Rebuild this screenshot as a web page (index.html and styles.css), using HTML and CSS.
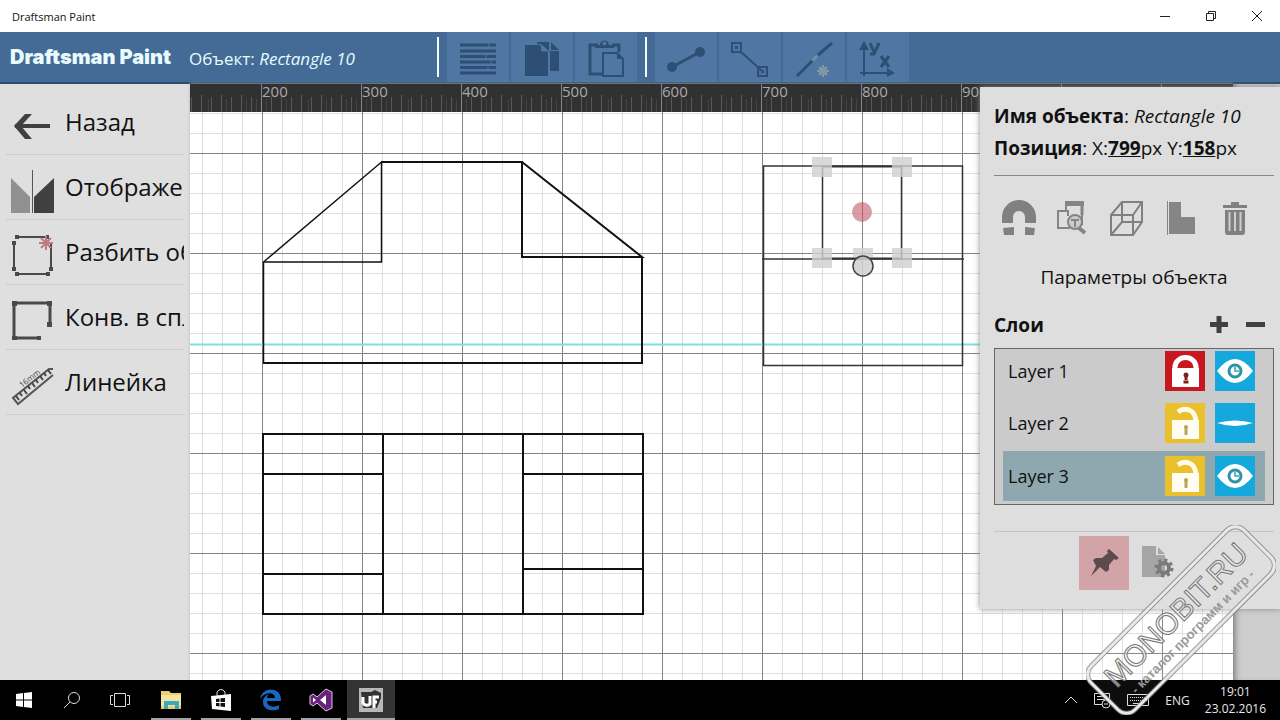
FILE: index.html
```html
<!DOCTYPE html>
<html lang="ru">
<head>
<meta charset="utf-8">
<title>Draftsman Paint</title>
<link rel="stylesheet" href="styles.css">
</head>
<body>
<div class="titlebar">
  <span class="titlebar-name">Draftsman Paint</span>
  <div class="window-buttons">
    <button class="window-button" aria-label="Свернуть"><svg width="12" height="12" viewBox="0 0 12 12"><path d="M1 6.500H11" class="thin"/></svg></button>
    <button class="window-button" aria-label="Восстановить"><svg width="12" height="12" viewBox="0 0 12 12"><path d="M1.500 3.500H8.500V10.500H1.500ZM3.500 3.500V1.500H10.500V8.500H8.500" class="thin"/></svg></button>
    <button class="window-button" aria-label="Закрыть"><svg width="12" height="12" viewBox="0 0 12 12"><path d="M1 1L11 11M11 1L1 11" class="thin"/></svg></button>
  </div>
</div>

<header class="header">
  <h1 class="brand">Draftsman Paint</h1>
  <p class="current">Объект: <em>Rectangle 10</em></p>
  <div class="toolbar">
    <button class="tool" aria-label="Штриховка"><svg width="40" height="40" viewBox="0 0 40 40"><path d="M2 8H38M2 14H38M2 19.500H38M2 25H38M2 30.500H38M2 36H38" stroke="#2d4f73" stroke-width="3"/><path d="M31 6V10M28 17V21M33 23V27M30 28V32" stroke="#5077a3" stroke-width="1"/></svg></button>
    <button class="tool" aria-label="Копировать"><svg width="40" height="40" viewBox="0 0 40 40"><path d="M3 8H19V14H26V39H3Z" fill="#2d4f73"/><path d="M15 5H27V14H37V34H28V15L19 7H15Z" fill="#2d4f73"/><path d="M29 5L37 13H29Z" fill="#2d4f73"/><path d="M20 8V14H26" fill="none" stroke="#5077a3"/></svg></button>
    <button class="tool" aria-label="Вставить"><svg width="40" height="40" viewBox="0 0 40 40"><path d="M12 8H4V37H17M26 8H33V15" fill="none" stroke="#2d4f73" stroke-width="3"/><path d="M9 11V8H14A4.500 4.500 0 0 1 23 8H28V11Z" fill="#2d4f73"/><circle cx="18.500" cy="6.500" r="2" fill="#5077a3"/><path d="M17 16H31L37 22V39H17Z" fill="#5077a3" stroke="#2d4f73" stroke-width="2"/><path d="M31 15V22H38Z" fill="#2d4f73"/></svg></button>
  </div>
  <div class="toolbar">
    <button class="tool" aria-label="Линия"><svg width="40" height="40" viewBox="0 0 40 40"><path d="M6 30L34 15" stroke="#2d4f73" stroke-width="3"/><circle cx="6" cy="30" r="5" fill="#2d4f73"/><circle cx="34" cy="15" r="5" fill="#2d4f73"/></svg></button>
    <button class="tool" aria-label="Отрезок"><svg width="40" height="40" viewBox="0 0 40 40"><path d="M10 14L32 34" stroke="#2d4f73" stroke-width="2"/><path d="M2 6H11V15H2ZM28 30H37V39H28Z" fill="none" stroke="#2d4f73" stroke-width="2"/><path d="M5 9H8V12H5ZM31 33H34V36H31Z" fill="#2d4f73"/></svg></button>
    <button class="tool" aria-label="Разрезать"><svg width="40" height="40" viewBox="0 0 40 40"><path d="M3 39L18 24M24 18L38 6" stroke="#2d4f73" stroke-width="3"/><path d="M19 23L23 19" stroke="#75909a" stroke-width="3"/><circle cx="29" cy="34" r="4" fill="#8298a0"/><path d="M29 28V40M23 34H35M25 30L33 38M33 30L25 38" stroke="#8298a0" stroke-width="2"/></svg></button>
    <button class="tool" aria-label="Оси координат"><svg width="40" height="40" viewBox="0 0 40 40"><path d="M6 39V8M2 36H32" stroke="#2d4f73" stroke-width="2"/><path d="M6 4L11 13H1ZM37 36L29 31V40Z" fill="#2d4f73"/><path d="M12 6L16 15M21 6L16 17H12M23 19L31 30M31 19L23 30" stroke="#2d4f73" stroke-width="3" fill="none"/></svg></button>
  </div>
</header>

<main class="workspace">
  <nav class="sidebar">
    <button class="side-item"><svg width="44" height="48" viewBox="0 0 44 48"><path d="M5 26H40" stroke="#404040" stroke-width="4"/><path d="M4 26L15 14H22L11 26L22 39H15Z" fill="#404040"/></svg><span class="side-label">Назад</span></button>
    <button class="side-item"><svg width="44" height="48" viewBox="0 0 44 48"><path d="M1 13L20 32V48H1Z" fill="#909090"/><path d="M44 13L24 32V48H44Z" fill="#404040"/><path d="M22.500 5V48" stroke="#555"/></svg><span class="side-label">Отображе</span></button>
    <button class="side-item"><svg width="44" height="48" viewBox="0 0 44 48"><path d="M7 7H37M41 14V39M37 44H7M4 39V13" stroke="#4a4a4a" stroke-width="2"/><path d="M5 5H9V9H5ZM36 5H39V9H36ZM2 11H6V15H2ZM2 37H6V41H2ZM5 42H9V46H5ZM36 42H40V46H36ZM39 37H43V41H39Z" fill="#4a4a4a"/><path d="M36 6V20M29 13H43M31 8L41 18M41 8L31 18" stroke="#be7b80" stroke-width="2"/></svg><span class="side-label">Разбить об</span></button>
    <button class="side-item"><svg width="44" height="48" viewBox="0 0 44 48"><path d="M28 43H4V8H40V30" stroke="#4a4a4a" stroke-width="3" fill="none"/><path d="M2 6H7V11H2ZM37 6H42V11H37ZM2 41H7V45H2ZM27 41H31V45H27ZM37 27H42V32H37Z" fill="#4a4a4a"/></svg><span class="side-label">Конв. в спл</span></button>
    <button class="side-item"><svg width="44" height="48" viewBox="0 0 44 48"><path d="M43 9L39 9L3 38L8 44L43 15" fill="none" stroke="#555" stroke-width="2"/><path d="M6 36L9 40M10 33L12 36M14 30L17 34M18 26L20 29M22 23L25 27M26 20L28 23M30 16L33 20M34 13L36 16M38 10L41 14" stroke="#444" stroke-width="2"/><text x="0" y="0" transform="translate(12 28) rotate(-38)" class="ruler-mark">16mm</text></svg><span class="side-label">Линейка</span></button>
  </nav>

  <section class="stage">
    <svg class="ruler" width="100%" height="28">
      <defs><pattern id="ticks" width="100" height="28" patternUnits="userSpaceOnUse" x="71">
        <path d="M.5 0V28" stroke="#858585"/>
        <path d="M10.500 13V28M20.500 11V28M30.500 13V28M40.500 11V28M50.500 13V28M60.500 11V28M70.500 13V28M80.500 11V28M90.500 13V28" stroke="#585858"/>
        <path d="M5.500 15V28M25.500 15V28M47.500 15V28M65.500 15V28M85.500 15V28M95.500 15V28" stroke="#444"/>
      </pattern></defs>
      <rect width="100%" height="28" fill="#313131"/>
      <rect width="100%" height="28" fill="url(#ticks)"/>
      <g class="ruler-numbers"><text x="72" y="13">200</text><text x="172" y="13">300</text><text x="272" y="13">400</text><text x="372" y="13">500</text><text x="472" y="13">600</text><text x="572" y="13">700</text><text x="672" y="13">800</text><text x="772" y="13">900</text></g>
    </svg>
    <svg class="canvas" width="100%" height="100%">
      <defs><pattern id="grid" width="100" height="100" patternUnits="userSpaceOnUse" x="72" y="41">
        <path d="M20.500 0V100M40.500 0V100M60.500 0V100M80.500 0V100M0 20.500H100M0 40.500H100M0 60.500H100M0 80.500H100" stroke="#dedede"/>
        <path d="M0 .5H100M.5 0V100" stroke="#848484"/>
      </pattern></defs>
      <rect width="100%" height="100%" fill="#fff"/>
      <rect width="100%" height="100%" fill="url(#grid)"/>
      <path d="M0 232.500H1043" stroke="#7fdfdf" stroke-width="2"/>
      <g fill="none" stroke="#111">
        <path d="M73.500 251V150L191.500 50V150H73.500" stroke-width="1.500"/>
        <path d="M191 50H332V145H452L332 50M73 251H452V145" stroke-width="2"/>
        <path d="M73 322H453V502H73ZM193 322V502M333 322V502M73 362H193M73 462H193M333 362H453M333 457H453" stroke-width="2"/>
      </g>
      <g fill="none" stroke="#333" stroke-width="1.500">
        <path d="M573.500 54H772.500V253.500H573.500ZM572 147H774M632.500 54V147M711.500 54V147"/>
        <path d="M632 54.500H712M632 146.500H712" stroke-width="2"/>
      </g>
      <g fill="#cfcfcf" fill-opacity=".8"><path d="M622 45H642V65H622ZM702 45H722V65H702ZM622 136H642V156H622ZM702 136H722V156H702ZM663 136H683V145H663Z"/></g>
      <circle cx="672" cy="100" r="10" fill="#ca7480" fill-opacity=".7"/>
      <path d="M672.500 90V110" stroke="#a05560" stroke-opacity=".6"/>
      <circle cx="673" cy="154" r="10" fill="#d0d0d0" fill-opacity=".85" stroke="#444" stroke-width="1.500"/>
    </svg>
  </section>
  <div class="beyond"></div>

  <aside class="panel">
    <p class="fact"><b>Имя объекта</b>: <em>Rectangle 10</em></p>
    <p class="fact"><b>Позиция</b>: X:<button class="value">799</button>px Y:<button class="value">158</button>px</p>
    <hr class="rule dark">
    <div class="object-tools">
      <button class="plain" aria-label="Магнит"><svg width="36" height="36" viewBox="0 0 36 36"><path d="M1 23V17A17 17 0 0 1 35 17V23H24V17A6 6 0 0 0 12 17V23ZM2 28L13 27V35H3ZM24 27L34 28L33 35H24Z" fill="#808080"/></svg></button>
      <button class="plain" aria-label="Найти объект"><svg width="36" height="36" viewBox="0 0 36 36"><path d="M10 3H27V15" stroke="#858585" stroke-width="3" fill="none"/><path d="M11 3V11M27 14V25M8 11H3V28H15M7 11H13V16" stroke="#858585" stroke-width="2" fill="none"/><path d="M10 1H29V6H10Z" fill="#858585"/><circle cx="20" cy="22" r="7" fill="#ccc" stroke="#858585" stroke-width="2"/><path d="M16 20H24M20 20V27" stroke="#858585" stroke-width="2"/><path d="M24 28L30 33" stroke="#858585" stroke-width="4"/></svg></button>
      <button class="plain" aria-label="Куб"><svg width="36" height="36" viewBox="0 0 36 36"><path d="M2 15L13 2H33V22L24 35H2ZM2 15H24V35M24 15L33 2M13 2V22H33M13 22L2 35" fill="none" stroke="#808080" stroke-width="2"/></svg></button>
      <button class="plain" aria-label="Выровнять"><svg width="36" height="36" viewBox="0 0 36 36"><path d="M4.500 1V35" stroke="#858585"/><path d="M6 2H18V17H32V34H6Z" fill="#858585"/></svg></button>
      <button class="plain" aria-label="Удалить"><svg width="36" height="36" viewBox="0 0 36 36"><path d="M6 8V5H14V2H22V5H30V8ZM8 10H28V32Q28 35 25 35H11Q8 35 8 32Z" fill="#808080"/><path d="M12.500 12V31M18 12V31M23.500 12V31" stroke="#cecece" stroke-width="2"/></svg></button>
    </div>
    <h2 class="params">Параметры объекта</h2>
    <div class="layers-head">
      <h3 class="layers-title">Слои</h3>
      <button class="plain" aria-label="Добавить слой"><svg width="20" height="20" viewBox="0 0 20 20"><path d="M10 1V18M1 9.500H19" stroke="#404040" stroke-width="5"/></svg></button>
      <button class="plain" aria-label="Удалить слой"><svg width="20" height="20" viewBox="0 0 20 20"><path d="M1 9.500H20" stroke="#404040" stroke-width="5"/></svg></button>
    </div>
    <ul class="layers">
      <li class="layer"><span class="layer-name">Layer 1</span>
        <button class="lock locked" aria-label="Разблокировать"><svg width="40" height="40" viewBox="0 0 40 40"><path d="M10 18V16A10.500 9.500 0 0 1 31 16V18" fill="none" stroke="#fff" stroke-width="5"/><path d="M7 17H34V36H7Z" fill="#fff"/><circle cx="21" cy="24" r="2.500" fill="#802020"/><path d="M21 24V29" stroke="#802020" stroke-width="3"/><path d="M18.500 31H23.500" stroke="#802020" stroke-width="3"/></svg></button>
        <button class="eye" aria-label="Скрыть"><svg width="40" height="40" viewBox="0 0 40 40"><path d="M2 20Q20-4 38 20Q20 44 2 20Z" fill="#fff"/><circle cx="20" cy="20" r="6" fill="none" stroke="#2a94a8" stroke-width="3"/><path d="M20 15V20H24" fill="none" stroke="#68b8c5" stroke-width="2"/></svg></button></li>
      <li class="layer"><span class="layer-name">Layer 2</span>
        <button class="lock" aria-label="Заблокировать"><svg width="40" height="40" viewBox="0 0 40 40"><path d="M13 9Q18 5 24 7Q30 9 31 18" fill="none" stroke="#fffbe8" stroke-width="5"/><path d="M7 17H34V36H7Z" fill="#fffdf2"/><circle cx="21" cy="24" r="2" fill="#b9a45e"/><path d="M21 24V32" stroke="#b9a45e" stroke-width="3"/></svg></button>
        <button class="eye" aria-label="Показать"><svg width="40" height="40" viewBox="0 0 40 40"><path d="M2 20Q20 15 38 20Q20 26 2 20Z" fill="#fff"/></svg></button></li>
      <li class="layer selected"><span class="layer-name">Layer 3</span>
        <button class="lock" aria-label="Заблокировать"><svg width="40" height="40" viewBox="0 0 40 40"><path d="M13 9Q18 5 24 7Q30 9 31 18" fill="none" stroke="#fffbe8" stroke-width="5"/><path d="M7 17H34V36H7Z" fill="#fffdf2"/><circle cx="21" cy="24" r="2" fill="#b9a45e"/><path d="M21 24V32" stroke="#b9a45e" stroke-width="3"/></svg></button>
        <button class="eye" aria-label="Скрыть"><svg width="40" height="40" viewBox="0 0 40 40"><path d="M2 20Q20-4 38 20Q20 44 2 20Z" fill="#fff"/><circle cx="20" cy="20" r="6" fill="none" stroke="#2a94a8" stroke-width="3"/><path d="M20 15V20H24" fill="none" stroke="#68b8c5" stroke-width="2"/></svg></button></li>
    </ul>
    <hr class="rule">
    <div class="panel-foot">
      <button class="pin" aria-label="Закрепить"><svg width="32" height="32" viewBox="0 0 32 32"><path d="M21 2L31 11L28 13L26 12L21 18L21 23L18 25L12 20L3 29L8 19L5 13L8 11L14 11L20 6L19 4Z" fill="#5d4a4c"/></svg></button>
      <button class="plain" aria-label="Настройки документа"><svg width="34" height="34" viewBox="0 0 34 34"><path d="M1 0H15V9H24V31H1Z" fill="#a5a5a5"/><path d="M17 1L24 8H17Z" fill="#a5a5a5"/><circle cx="23" cy="22" r="5" fill="none" stroke="#7a7a7a" stroke-width="4"/><circle cx="23" cy="22" r="8" fill="none" stroke="#7a7a7a" stroke-width="3" stroke-dasharray="3.142 3.142"/></svg></button>
    </div>
  </aside>
</main>

<footer class="taskbar">
  <button class="task" aria-label="Пуск"><svg width="16" height="16" viewBox="0 0 16 16"><path d="M0 2L7 1V7.500H0ZM8 1L16 0V7.500H8ZM0 8.500H7V15L0 14ZM8 8.500H16V16L8 15Z" fill="#fff"/></svg></button>
  <button class="task" aria-label="Поиск"><svg width="18" height="18" viewBox="0 0 18 18"><circle cx="11" cy="7" r="5.500" fill="none" stroke="#ddd"/><path d="M7 11L1 17" stroke="#ddd"/></svg></button>
  <button class="task" aria-label="Представление задач"><svg width="20" height="16" viewBox="0 0 20 16"><path d="M4.500 1.500H15.500V14.500H4.500ZM3 3.500H.5V12.500H3M17 3.500H19.500V12.500H17" fill="none" stroke="#ddd"/></svg></button>
  <div class="apps">
    <button class="task open" aria-label="Проводник"><svg width="24" height="24" viewBox="0 0 24 24"><path d="M2 3H10L12 5H22V21H2Z" fill="#e8cf70"/><path d="M2 7H22V18H2Z" fill="#f4e6a0"/><path d="M5 13H20V21H16V17H9V21H5Z" fill="#3da7bd"/></svg></button>
    <button class="task open" aria-label="Магазин"><svg width="24" height="24" viewBox="0 0 24 24"><path d="M2 8L22 6V23L3 21Z" fill="#fff"/><path d="M8 8V4Q12-1 16 4V7" fill="none" stroke="#ddd"/><path d="M7 11L10.500 10.500V14H7ZM11.500 10.300L16 10V14H11.500ZM7 15H10.500V18.500L7 18ZM11.500 15H16V19L11.500 18.500Z" fill="#111"/></svg></button>
    <button class="task open" aria-label="Edge"><svg width="24" height="24" viewBox="0 0 24 24"><path d="M1 11C3-2 23-2 22 13H8C8 19 15 20 20 17V21C13 24 4 22 4 14C4 10 7 7 10 6C8 8 8 9 8 10H16C16 3 5 4 1 11Z" fill="#1769c0"/></svg></button>
    <button class="task open" aria-label="Visual Studio"><svg width="24" height="24" viewBox="0 0 24 24"><path d="M17 1L23 4V20L17 23L8 15L4 18L1 16V8L4 6L8 9Z" fill="#68217a" stroke="#dcc8e4"/><path d="M17 7V17L11 12ZM4 9.500L7 12L4 14.500Z" fill="#fff"/></svg></button>
    <button class="task open active" aria-label="Draftsman Paint"><svg width="24" height="24" viewBox="0 0 24 24"><path d="M0 0H24V24H0Z" fill="#b8b8b8"/><path d="M2 4H12L16 2L22 5V10L18 20H4Z" fill="#333"/><path d="M4 9V15Q7 19 11 16V8M15 20V9H20M15 14H18" fill="none" stroke="#fff" stroke-width="3"/></svg></button>
  </div>
  <div class="tray">
    <svg width="14" height="14" viewBox="0 0 14 14"><path d="M1 10L7 4L13 10" fill="none" stroke="#ddd"/></svg>
    <svg width="18" height="18" viewBox="0 0 18 18"><path d="M9 13.500H1.500V2.500H16.500V9M4 5.500H14M4 8.500H12" fill="none" stroke="#ddd"/><circle cx="13" cy="13" r="4" fill="#000" stroke="#ddd"/><path d="M11 13H15" stroke="#ddd"/></svg>
    <svg width="24" height="16" viewBox="0 0 24 16"><path d="M1.500 2.500H22.500V13.500H1.500Z" fill="none" stroke="#ddd"/><path d="M4 5.500H21M4 8.500H21" stroke="#ddd" stroke-dasharray="1 1"/><path d="M7 11.500H17" stroke="#ddd"/></svg>
    <span>ENG</span>
    <time class="clock">19:01<br>23.02.2016</time>
  </div>
</footer>

<svg class="stamp" width="190" height="190" viewBox="-95 -95 190 190">
  <g transform="rotate(-45)">
    <rect x="-108" y="-31" width="216" height="62" rx="12" fill="#fff" fill-opacity=".05" stroke="#777" stroke-width="5" stroke-opacity=".7"/>
    <rect x="-108" y="-31" width="216" height="62" rx="12" fill="none" stroke="#e8e8e8" stroke-width="3"/>
    <text x="0" y="3" class="stamp-name">MONOBIT.RU</text>
    <text x="0" y="21" class="stamp-line">- каталог программ и игр -</text>
  </g>
</svg>
</body>
</html>
```
FILE: styles.css
```css
* { box-sizing: border-box; }
html, body { height: 100%; }
body {
  margin: 0;
  display: flex;
  flex-direction: column;
  position: relative;
  overflow: hidden;
  font-family: "Open Sans", "Noto Sans", sans-serif;
  color: #111;
  background: #fff;
}
h1, h2, h3, p, ul { margin: 0; padding: 0; font-weight: 400; }
button { border: 0; padding: 0; background: none; font: inherit; color: inherit; }
svg { display: block; flex: none; }

.titlebar { height: 32px; flex: none; display: flex; align-items: center; justify-content: space-between; padding-left: 12px; }
.titlebar-name { font-size: 11px; }
.window-buttons { display: flex; }
.window-button { width: 46px; height: 32px; display: grid; place-items: center; }
.thin { fill: none; stroke: #222; }

.header { height: 52px; flex: none; display: flex; align-items: center; padding-left: 10px; background: #446b95; color: #e8fbff; border-bottom: 2px solid #2c4c6c; }
.brand { width: 179px; font-family: Inter, sans-serif; font-size: 20px; font-weight: 900; white-space: nowrap; }
.current { width: 248px; padding-top: 2px; font-size: 17px; white-space: nowrap; }
.toolbar { display: flex; gap: 2px; padding-left: 8px; margin-right: 8px; border-left: 2px solid #eefcff; height: 40px; align-items: center; }
.tool { width: 62px; height: 50px; display: grid; place-items: center; background: #5077a3; }

.workspace { flex: 1; min-height: 0; display: flex; position: relative; }
.sidebar { width: 190px; flex: none; padding: 6px; background: #dfdfdf; }
.side-item { width: 100%; height: 65px; display: flex; align-items: center; gap: 11px; padding-left: 4px; border-bottom: 1px solid #cccccc; overflow: hidden; text-align: left; }
.side-item svg { margin-top: 4px; }
.side-label { flex: 1; overflow: hidden; white-space: nowrap; font-size: 24px; line-height: 40px; }
.ruler-mark { font-size: 8px; fill: #444; }

.stage { flex: 1; min-width: 0; display: flex; flex-direction: column; box-shadow: 0 0 3px #bbb; }
.canvas { flex: 1; min-height: 0; }
.ruler-numbers { fill: #aaa; font-size: 15px; }
.beyond { width: 47px; flex: none; background: #cecece; box-shadow: inset 6px 0 6px -4px #777; }

.panel { position: absolute; top: 3px; right: 0; width: 300px; padding: 13px 6px 19px 14px; background: #dedede; box-shadow: 0 0 6px #888; }
.fact { font-size: 19px; line-height: 32px; white-space: nowrap; }
.value { font-weight: 700; text-decoration: underline; }
.rule { height: 1px; margin: 11px 0 0; border: 0; background: #c4c4c4; }
.rule.dark { background: #888; }
.object-tools { display: flex; gap: 18px; padding: 24px 7px 0; }
.params { padding-top: 26px; font-size: 19px; line-height: 30px; text-align: center; }
.layers-head { display: flex; align-items: center; gap: 16px; height: 32px; margin: 17px 9px 7px 0; }
.layers-title { flex: 1; font-size: 19px; font-weight: 700; }
.layers { list-style: none; border: 1px solid #666; background: #cbcbcb; padding: 0 8px 3px; }
.layer { height: 50px; margin-top: 3px; display: flex; align-items: center; gap: 10px; padding: 0 10px 0 5px; font-size: 18px; }
.layer:first-child { height: 43px; margin: 0 0 6px; }
.layer.selected { background: #8fa7ae; }
.layer-name { flex: 1; }
.lock { background: #eac02c; }
.lock.locked { background: #c9171f; }
.eye { background: #15a8dc; }
.layers + .rule { margin-top: 26px; }
.panel-foot { display: flex; align-items: center; justify-content: center; gap: 12px; padding: 4px 14px 0 0; }
.pin { width: 50px; height: 54px; display: grid; place-items: center; background: #d2a4a8; }

.taskbar { height: 40px; flex: none; display: flex; background: #000; color: #e8e8e8; position: relative; }
.task { width: 48px; height: 40px; display: grid; place-items: center; }
.apps { display: flex; gap: 2px; padding-left: 3px; }
.open { background: linear-gradient(#a4a4ac, #a4a4ac) bottom / 40px 2px no-repeat; }
.open.active { background-color: #343434; background-size: 48px 2px; }
.tray { margin-left: auto; margin-right: 4px; padding-right: 10px; display: flex; align-items: center; gap: 15px; font-size: 12px; }
.clock { text-align: center; line-height: 17px; }

.stamp { position: absolute; right: 4px; bottom: 5px; pointer-events: none; }
.stamp-name { font-family: "Liberation Sans", sans-serif; font-size: 30px; text-anchor: middle; fill: #f0f0f0; fill-opacity: .6; stroke: #777; stroke-width: 1px; }
.stamp-line { font-family: "Liberation Sans", sans-serif; font-size: 13px; font-weight: 700; text-anchor: middle; fill: #999; }
```
